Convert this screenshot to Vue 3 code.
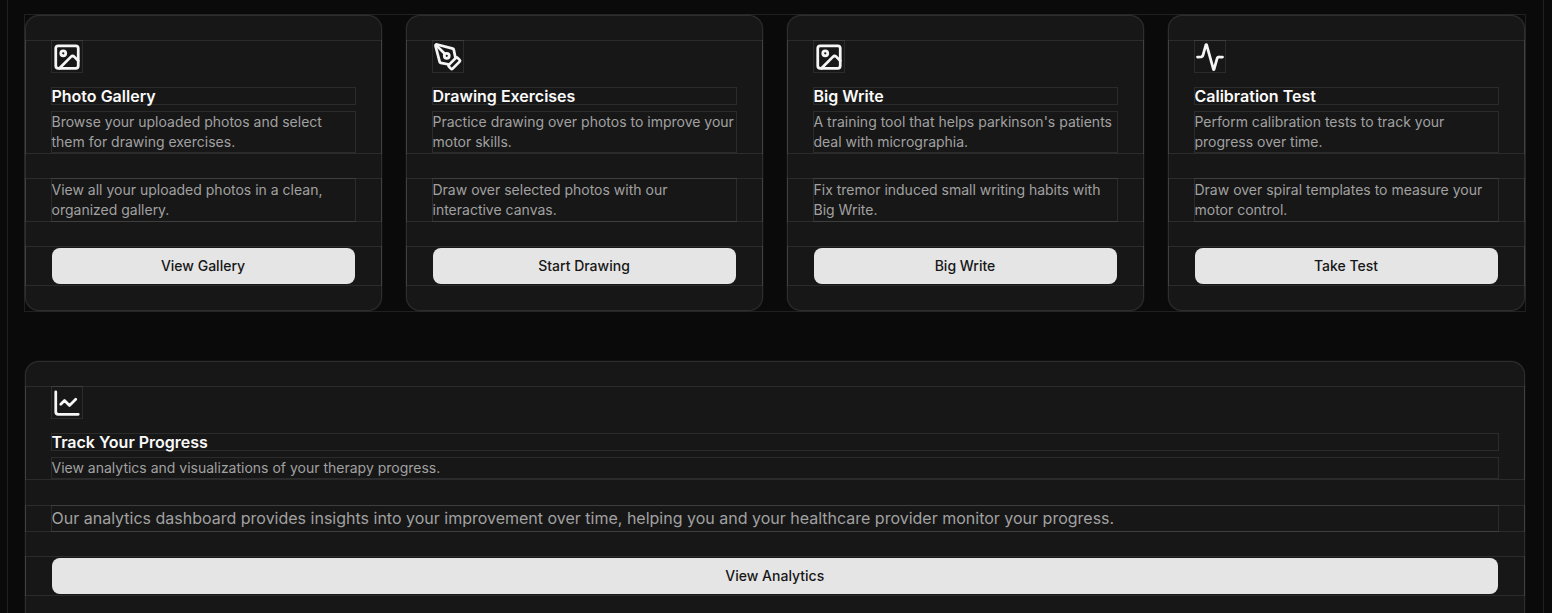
<script setup>
const cards = [
  { icon: 'image', title: 'Photo Gallery', desc: 'Browse your uploaded photos and select them for drawing exercises.', body: 'View all your uploaded photos in a clean, organized gallery.', action: 'View Gallery' },
  { icon: 'pen', title: 'Drawing Exercises', desc: 'Practice drawing over photos to improve your motor skills.', body: 'Draw over selected photos with our interactive canvas.', action: 'Start Drawing' },
  { icon: 'image', title: 'Big Write', desc: "A training tool that helps parkinson's patients deal with micrographia.", body: 'Fix tremor induced small writing habits with Big Write.', action: 'Big Write' },
  { icon: 'activity', title: 'Calibration Test', desc: 'Perform calibration tests to track your progress over time.', body: 'Draw over spiral templates to measure your motor control.', action: 'Take Test' },
]
</script>

<template>
  <div class="page">
    <div class="wrap">
      <div class="grid">
        <div v-for="c in cards" :key="c.title" class="card">
          <div class="head">
            <div class="icon">
              <svg viewBox="0 0 24 24" class="svg">
                <template v-if="c.icon === 'image'">
                  <rect x="3" y="3" width="18" height="18" rx="2" />
                  <circle cx="9" cy="9" r="2" />
                  <path d="m21 15-3.086-3.086a2 2 0 0 0-2.828 0L6 21" />
                </template>
                <template v-else-if="c.icon === 'pen'">
                  <path d="M15.707 21.293a1 1 0 0 1-1.414 0l-1.586-1.586a1 1 0 0 1 0-1.414l5.586-5.586a1 1 0 0 1 1.414 0l1.586 1.586a1 1 0 0 1 0 1.414z" />
                  <path d="m18 13-1.375-6.874a1 1 0 0 0-.746-.776L3.235 2.028a1 1 0 0 0-1.207 1.207L5.35 15.879a1 1 0 0 0 .776.746L13 18" />
                  <path d="m2.3 2.3 7.286 7.286" />
                  <circle cx="11" cy="11" r="2" />
                </template>
                <path v-else d="M22 12h-2.48a2 2 0 0 0-1.93 1.46l-2.35 8.36a.25.25 0 0 1-.48 0L9.24 2.18a.25.25 0 0 0-.48 0l-2.35 8.36A2 2 0 0 1 4.49 12H2" />
              </svg>
            </div>
            <h3 class="title">{{ c.title }}</h3>
            <p class="desc">{{ c.desc }}</p>
          </div>
          <div class="content"><p class="body">{{ c.body }}</p></div>
          <div class="foot"><button class="btn">{{ c.action }}</button></div>
        </div>
      </div>
      <div class="card wide">
        <div class="head">
          <div class="icon">
            <svg viewBox="0 0 24 24" class="svg">
              <path d="M3 3v16a2 2 0 0 0 2 2h16" />
              <path d="m19 9-5 5-4-4-3 3" />
            </svg>
          </div>
          <h3 class="title">Track Your Progress</h3>
          <p class="desc">View analytics and visualizations of your therapy progress.</p>
        </div>
        <div class="content"><p class="body big">Our analytics dashboard provides insights into your improvement over time, helping you and your healthcare provider monitor your progress.</p></div>
        <div class="foot"><button class="btn">View Analytics</button></div>
      </div>
    </div>
  </div>
</template>

<style scoped>
.page {
  height: 613px;
  overflow: hidden;
  background: #0a0a0a;
  font-family: Inter, "Liberation Sans", sans-serif;
}
.wrap, .grid, .head, .icon, .title, .desc, .content, .body, .foot {
  outline: 1px solid rgba(255, 255, 255, 0.09);
}
.card {
  outline: 1px solid rgba(255, 255, 255, 0.03);
}
.wrap {
  box-sizing: border-box;
  width: 1535px;
  margin-left: 8px;
  padding: 15px 18px 0 16.5px;
}
.grid {
  display: grid;
  grid-template-columns: repeat(4, 357px);
  column-gap: 24px;
}
.card {
  box-sizing: border-box;
  height: 296px;
  padding: 25px 0 24px;
  background: #171717;
  border: 1px solid rgba(255, 255, 255, 0.1);
  border-radius: 14px;
  display: flex;
  flex-direction: column;
  gap: 26px;
}
.wide {
  margin-top: 50px;
  height: 320px;
}
.wide .content {
  margin-top: 1px;
}
.head, .content, .foot {
  padding: 0 26px;
}
.head {
  display: flex;
  flex-direction: column;
}
.icon {
  width: 30px;
  height: 31px;
  margin-bottom: 16px;
}
.svg {
  display: block;
  width: 30px;
  height: 30px;
  margin-top: 1px;
  fill: none;
  stroke: #f5f5f5;
  stroke-width: 2.2;
  stroke-linecap: round;
  stroke-linejoin: round;
}
.title {
  margin: 0 0 8px;
  font-size: 16px;
  line-height: 16px;
  font-weight: 600;
  color: #fafafa;
}
.desc {
  margin: 0 0 1px;
  font-size: 14px;
  line-height: 20px;
  color: #a1a1a1;
}
.body {
  box-sizing: border-box;
  margin: 0;
  height: 42px;
  padding-top: 1px;
  font-size: 14px;
  line-height: 20px;
  color: #a1a1a1;
}
.big {
  height: 25px;
  padding-top: 0;
  font-size: 16px;
  line-height: 24px;
}
.foot {
  padding-top: 1px;
  padding-bottom: 1px;
}
.btn {
  display: block;
  width: 100%;
  height: 36px;
  margin: 0;
  padding: 0;
  border: none;
  border-radius: 8px;
  background: #e5e5e5;
  color: #171717;
  font: 500 14px/20px Inter, "Liberation Sans", sans-serif;
}
</style>

<style>
html, body {
  margin: 0;
  background: #0a0a0a;
  overflow: hidden;
}
</style>
